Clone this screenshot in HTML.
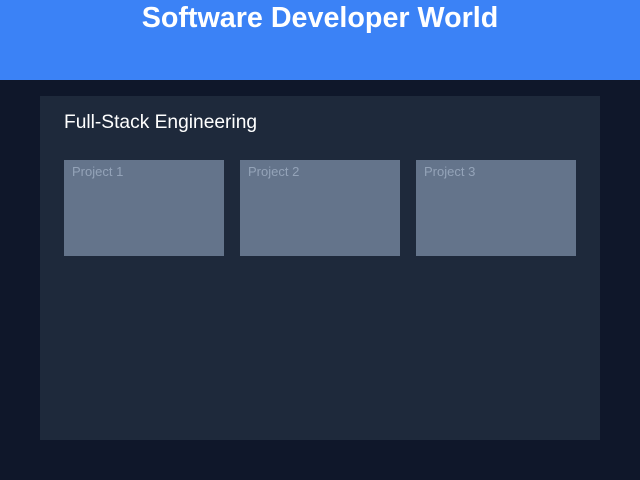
<!DOCTYPE html>
<html><head><style>
body{margin:0;width:640px;height:480px;background:#0f172a;font-family:"Liberation Sans",sans-serif;overflow:hidden}
header{height:80px;background:#3b82f6;color:#fff;text-align:center}
header h1{margin:0;font-size:28.7px;font-weight:bold;line-height:37px}
.main{position:absolute;left:40px;top:96px;width:560px;height:344px;background:#1e293b}
.main h2{position:absolute;left:24px;top:14px;margin:0;font-size:19.2px;font-weight:normal;color:#fff;line-height:25px}
.card{position:absolute;top:64px;width:160px;height:96px;background:#64748b;color:#94a3b8;font-size:13px}
.card span{position:absolute;left:8px;top:4px}
</style></head><body>
<header><h1>Software Developer World</h1></header>
<div class="main"><h2>Full-Stack Engineering</h2>
<div class="card" style="left:24px"><span>Project 1</span></div>
<div class="card" style="left:200px"><span>Project 2</span></div>
<div class="card" style="left:376px"><span>Project 3</span></div>
</div>
</body></html>
